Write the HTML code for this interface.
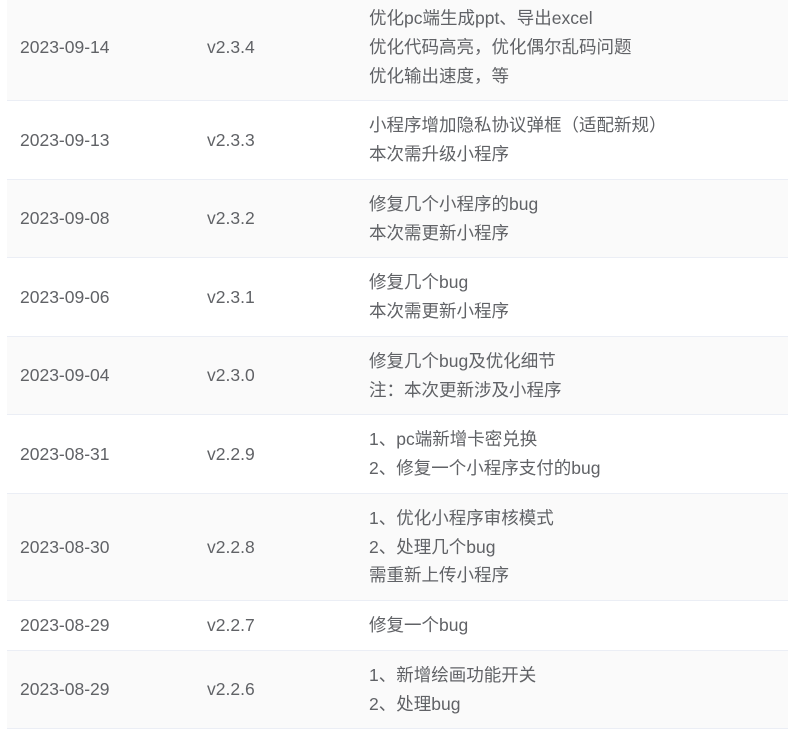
<!DOCTYPE html>
<html><head><meta charset="utf-8"><style>
body{margin:0;background:#fff;overflow:hidden;width:788px;height:723px}
table{position:absolute;left:7px;top:-6px;width:781px;border-collapse:collapse;font-family:"Liberation Sans","Noto Sans CJK SC",sans-serif;font-size:17.5px;color:#606266}
td{padding:10px 0;line-height:28.75px;border-bottom:1px solid #ebeef5;vertical-align:middle}
td.d{padding-left:13px;width:187px}
td.v{width:162px}
tr:nth-child(odd) td{background:#fafafa}
</style></head><body>
<table>
<tr><td class="d">2023-09-14</td><td class="v">v2.3.4</td><td>优化pc端生成ppt、导出excel<br>优化代码高亮，优化偶尔乱码问题<br>优化输出速度，等</td></tr>
<tr><td class="d">2023-09-13</td><td class="v">v2.3.3</td><td>小程序增加隐私协议弹框（适配新规）<br>本次需升级小程序</td></tr>
<tr><td class="d">2023-09-08</td><td class="v">v2.3.2</td><td>修复几个小程序的bug<br>本次需更新小程序</td></tr>
<tr><td class="d">2023-09-06</td><td class="v">v2.3.1</td><td>修复几个bug<br>本次需更新小程序</td></tr>
<tr><td class="d">2023-09-04</td><td class="v">v2.3.0</td><td>修复几个bug及优化细节<br>注：本次更新涉及小程序</td></tr>
<tr><td class="d">2023-08-31</td><td class="v">v2.2.9</td><td>1、pc端新增卡密兑换<br>2、修复一个小程序支付的bug</td></tr>
<tr><td class="d">2023-08-30</td><td class="v">v2.2.8</td><td>1、优化小程序审核模式<br>2、处理几个bug<br>需重新上传小程序</td></tr>
<tr><td class="d">2023-08-29</td><td class="v">v2.2.7</td><td>修复一个bug</td></tr>
<tr><td class="d">2023-08-29</td><td class="v">v2.2.6</td><td>1、新增绘画功能开关<br>2、处理bug</td></tr>
</table>
</body></html>
